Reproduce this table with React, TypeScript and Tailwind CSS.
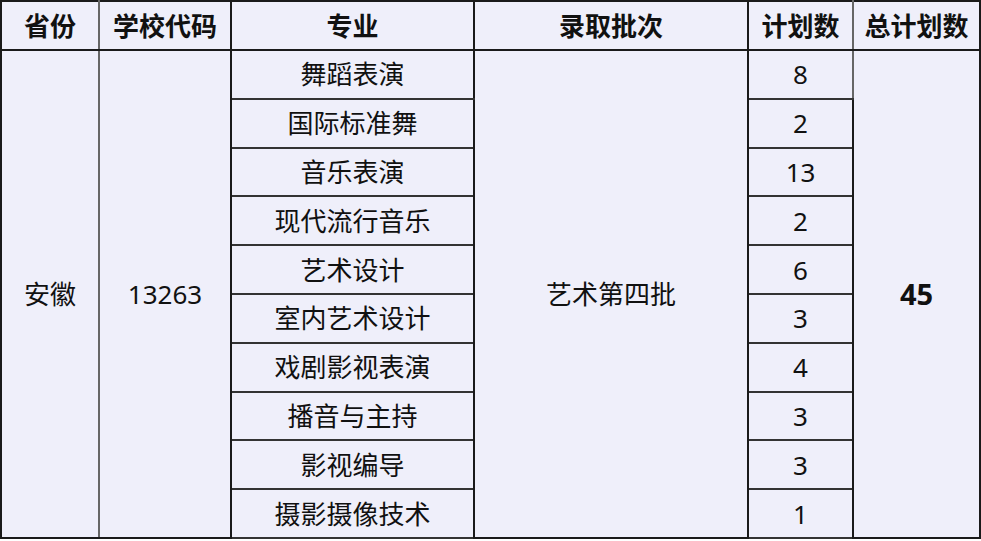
import React from "react";

const majors: [string, number][] = [
  ["舞蹈表演", 8],
  ["国际标准舞", 2],
  ["音乐表演", 13],
  ["现代流行音乐", 2],
  ["艺术设计", 6],
  ["室内艺术设计", 3],
  ["戏剧影视表演", 4],
  ["播音与主持", 3],
  ["影视编导", 3],
  ["摄影摄像技术", 1],
];

const font = { fontFamily: '"Noto Sans", "Noto Sans CJK SC", sans-serif' };

export default function App() {
  return (
    <div className="w-[981px] h-[541px] bg-white" style={font}>
      <table className="table-fixed border-collapse bg-[#efeffa] text-[#111] w-[979px] border-2 border-[#1a1a1a]">
        <colgroup>
          <col className="w-[98px]" />
          <col className="w-[132px]" />
          <col className="w-[243px]" />
          <col className="w-[274px]" />
          <col className="w-[105px]" />
          <col className="w-[127px]" />
        </colgroup>
        <thead>
          <tr className="h-[49px] text-[26px] leading-none font-bold">
            <th className="border-2 border-[#1a1a1a] border-r-[#666] p-0">省份</th>
            <th className="border-2 border-[#1a1a1a] p-0">学校代码</th>
            <th className="border-2 border-[#1a1a1a] p-0">专业</th>
            <th className="border-2 border-[#1a1a1a] p-0">录取批次</th>
            <th className="border-2 border-[#1a1a1a] border-r-[#666] p-0">计划数</th>
            <th className="border-2 border-[#1a1a1a] p-0">总计划数</th>
          </tr>
        </thead>
        <tbody className="text-[26px] leading-none text-center">
          {majors.map(([name, n], i) => (
            <tr key={name} className="h-[48.8px]">
              {i === 0 && (
                <>
                  <td rowSpan={10} className="border-2 border-[#1a1a1a] border-r-[#666] p-0">安徽</td>
                  <td rowSpan={10} className="border-2 border-[#1a1a1a] p-0">13263</td>
                </>
              )}
              <td className="border-2 border-[#1a1a1a] border-y-[#333] p-0">{name}</td>
              {i === 0 && (
                <td rowSpan={10} className="border-2 border-[#1a1a1a] p-0">艺术第四批</td>
              )}
              <td className="border-2 border-[#1a1a1a] border-y-[#333] border-r-[#666] p-0">{n}</td>
              {i === 0 && (
                <td rowSpan={10} className="border-2 border-[#1a1a1a] p-0 font-bold text-[29px]">45</td>
              )}
            </tr>
          ))}
        </tbody>
      </table>
    </div>
  );
}
